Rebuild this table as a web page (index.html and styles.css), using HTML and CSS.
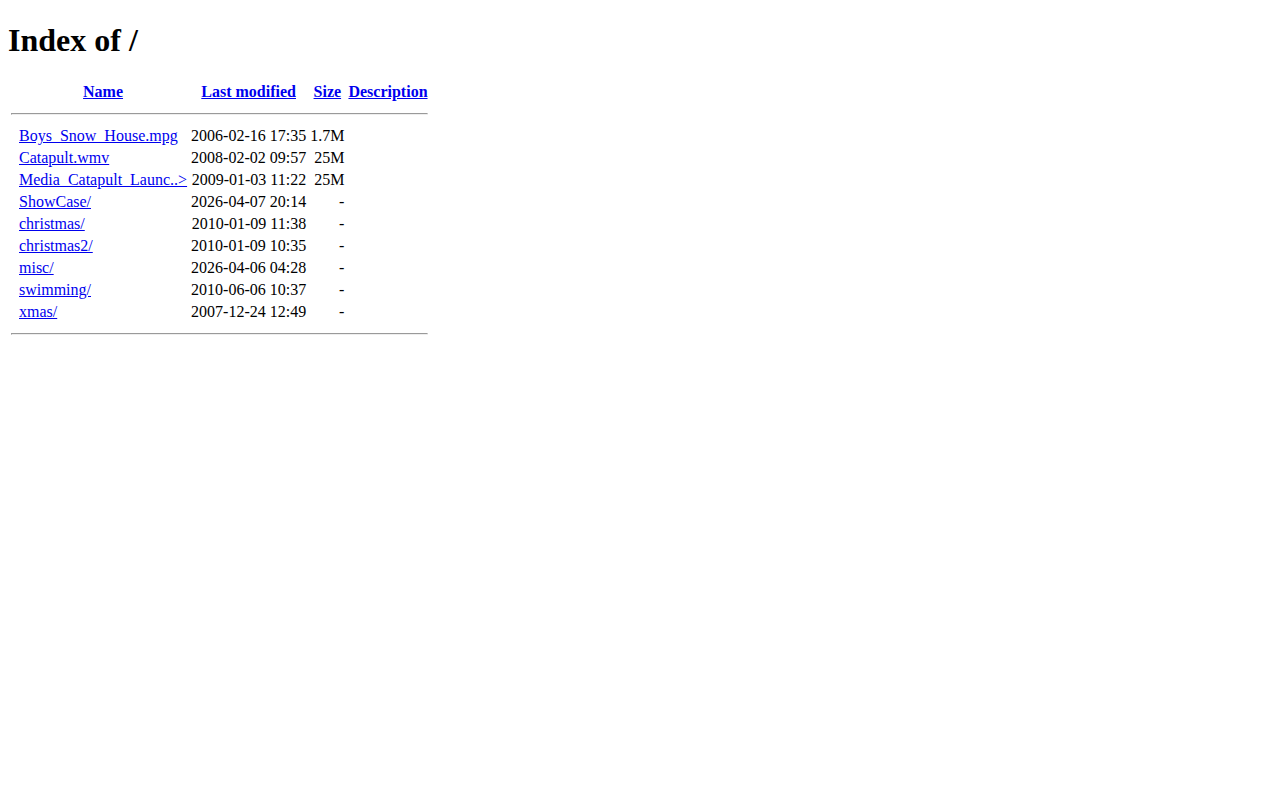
FILE: index.html
```html
<!DOCTYPE html>
<html>
<head>
<title>Index of /</title>
<link rel="stylesheet" href="styles.css">
</head>
<body>
<h1>Index of /</h1>
<table>
<tr><th class="ico"><span class="blank"></span></th><th><a href="#">Name</a></th><th><a href="#">Last modified</a></th><th><a href="#">Size</a></th><th><a href="#">Description</a></th></tr>
<tr><th colspan="5"><hr></th></tr>
<tr><td class="ico"><span class="blank"></span></td><td><a href="#">Boys_Snow_House.mpg</a></td><td class="r">2006-02-16 17:35  </td><td class="r">1.7M</td><td>&nbsp;</td></tr>
<tr><td class="ico"><span class="blank"></span></td><td><a href="#">Catapult.wmv</a></td><td class="r">2008-02-02 09:57  </td><td class="r"> 25M</td><td>&nbsp;</td></tr>
<tr><td class="ico"><span class="blank"></span></td><td><a href="#">Media_Catapult_Launc..&gt;</a></td><td class="r">2009-01-03 11:22  </td><td class="r"> 25M</td><td>&nbsp;</td></tr>
<tr><td class="ico"><span class="blank"></span></td><td><a href="#">ShowCase/</a></td><td class="r">2026-04-07 20:14  </td><td class="r">  - </td><td>&nbsp;</td></tr>
<tr><td class="ico"><span class="blank"></span></td><td><a href="#">christmas/</a></td><td class="r">2010-01-09 11:38  </td><td class="r">  - </td><td>&nbsp;</td></tr>
<tr><td class="ico"><span class="blank"></span></td><td><a href="#">christmas2/</a></td><td class="r">2010-01-09 10:35  </td><td class="r">  - </td><td>&nbsp;</td></tr>
<tr><td class="ico"><span class="blank"></span></td><td><a href="#">misc/</a></td><td class="r">2026-04-06 04:28  </td><td class="r">  - </td><td>&nbsp;</td></tr>
<tr><td class="ico"><span class="blank"></span></td><td><a href="#">swimming/</a></td><td class="r">2010-06-06 10:37  </td><td class="r">  - </td><td>&nbsp;</td></tr>
<tr><td class="ico"><span class="blank"></span></td><td><a href="#">xmas/</a></td><td class="r">2007-12-24 12:49  </td><td class="r">  - </td><td>&nbsp;</td></tr>
<tr><th colspan="5"><hr></th></tr>
</table>
</body>
</html>
```

FILE: styles.css
```css
body {
  font-family: "Liberation Serif", "Times New Roman", serif;
  background: #ffffff;
  color: #000000;
  display: flow-root;
}
h1 {
  margin-top: 14px;
}
a {
  color: #0000ee;
}
.r {
  text-align: right;
}
.ico {
  vertical-align: top;
}
.blank {
  display: inline-block;
  width: 4px;
  height: 1px;
}
```
